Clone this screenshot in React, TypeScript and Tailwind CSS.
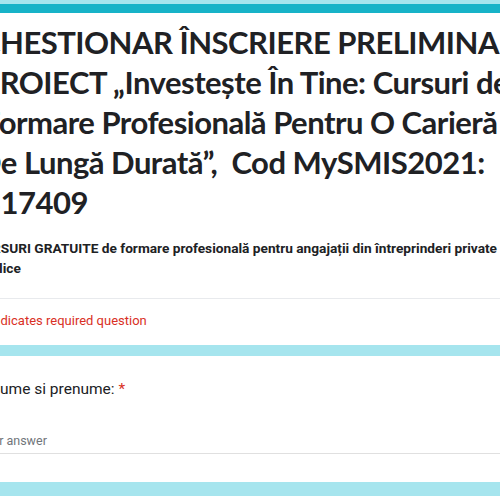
import React from "react";

export default function App() {
  const titleFont = { fontFamily: 'Lato, "Open Sans", sans-serif' };
  const bodyFont = { fontFamily: 'Roboto, "Noto Sans", sans-serif' };
  return (
    <div className="w-[500px] h-[500px] overflow-hidden bg-[#a6e5ee] pt-[4px]">
      <div className="bg-white border-t-[9px] border-[#17b3c8]">
        <div
          className="pt-[9px] text-[31px] leading-[40px] font-bold text-[#202124] whitespace-nowrap tracking-[-0.5px]"
          style={titleFont}
        >
          <div className="ml-[-20px]">CHESTIONAR ÎNSCRIERE PRELIMINARĂ</div>
          <div className="ml-[-19px]">PROIECT „Investește În Tine: Cursuri de</div>
          <div className="ml-[-17px]">Formare Profesională Pentru O Carieră</div>
          <div className="ml-[-22px]">De Lungă Durată”,&nbsp; Cod MySMIS2021:</div>
          <div className="ml-[-17px]">317409</div>
        </div>
        <div
          className="mt-[16px] text-[13.7px] leading-[20px] font-bold text-[#202124] whitespace-nowrap"
          style={bodyFont}
        >
          <div className="ml-[-26px]">
            CURSURI GRATUITE de formare profesională pentru angajații din întreprinderi private și
          </div>
          <div className="ml-[-24px]">publice</div>
        </div>
        <div className="mt-[20px] border-t border-[#e8eaed] pt-[14px] pb-[16px]">
          <div
            className="ml-[-19px] text-[13px] leading-[16px] text-[#d93025] whitespace-nowrap"
            style={bodyFont}
          >
            * Indicates required question
          </div>
        </div>
      </div>
      <div className="mt-[11px] bg-white pt-[23px] pb-[28px]">
        <div
          className="ml-[-11px] text-[15.5px] leading-[20px] text-[#202124] whitespace-nowrap"
          style={bodyFont}
        >
          Nume si prenume: <span className="text-[#d93025]">*</span>
        </div>
        <div className="mt-[34px] border-b border-[#e0e0e0] pb-[4px]">
          <div
            className="ml-[-22px] text-[12.5px] leading-[16px] text-[#70757a] whitespace-nowrap"
            style={bodyFont}
          >
            Your answer
          </div>
        </div>
      </div>
      <div className="mt-[14px] bg-white h-[40px]"></div>
    </div>
  );
}
